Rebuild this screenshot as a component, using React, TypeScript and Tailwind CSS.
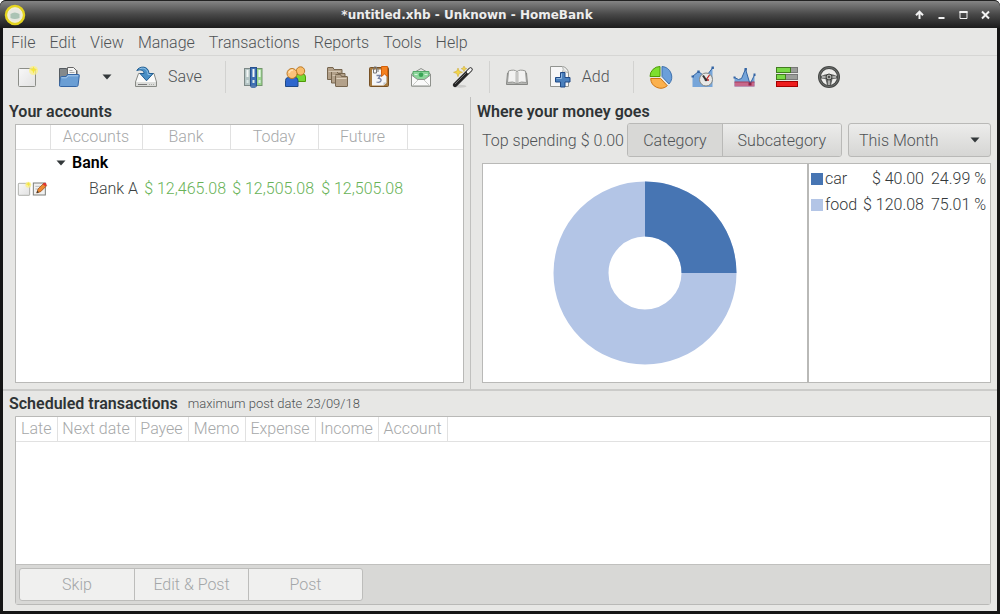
import { useState } from 'react';
import type { ReactNode } from 'react';
import clsx from 'clsx';

const menus = ['File', 'Edit', 'View', 'Manage', 'Transactions', 'Reports', 'Tools', 'Help'];

const scheduledColumns = [
  { label: 'Late', width: 'w-[41px]' },
  { label: 'Next date', width: 'w-[78px]' },
  { label: 'Payee', width: 'w-[53px]' },
  { label: 'Memo', width: 'w-[57px]' },
  { label: 'Expense', width: 'w-[70px]' },
  { label: 'Income', width: 'w-[63px]' },
  { label: 'Account', width: 'w-[69px]' },
];

const spending = [
  { name: 'car', amount: '$ 40.00', rate: '24.99 %', color: 'bg-[#4775b3]' },
  { name: 'food', amount: '$ 120.08', rate: '75.01 %', color: 'bg-[#b3c5e6]' },
];

function Icon({ children, className = 'size-6' }: { children: ReactNode; className?: string }) {
  return (
    <svg viewBox="0 0 24 24" className={clsx('shrink-0', className)} aria-hidden="true">
      {children}
    </svg>
  );
}

function Arrow() {
  return (
    <svg viewBox="0 0 10 6" className="w-[10px] h-[6px] shrink-0" aria-hidden="true">
      <path d="M0.5 0.5h9L5 5.5z" fill="#33383a" />
    </svg>
  );
}

function NewIcon({ className }: { className?: string }) {
  return (
    <Icon className={className}>
      <defs>
        <linearGradient id="paper" x1="0" y1="0" x2="1" y2="1">
          <stop offset="0" stopColor="#f8f8f8" />
          <stop offset="1" stopColor="#e2e2e2" />
        </linearGradient>
      </defs>
      <rect x="3.5" y="3.5" width="17" height="18" rx="1" fill="url(#paper)" stroke="#8c8e88" />
      <circle cx="18.5" cy="5.5" r="4.5" fill="#fbf08a" opacity="0.8" />
      <path d="M18.5 1.5l1 2.3 2.5 1-2.5 1-1 2.6-1-2.6-2.6-1 2.6-1z" fill="#f5e63a" />
    </Icon>
  );
}

function OpenIcon() {
  return (
    <Icon>
      <path d="M2.500 3.500h7l1 2h9.500v14H2.500z" fill="#84898c" stroke="#555b60" />
      <path d="M10.500 2.500h6l3 3V13h-9z" fill="#f4f4f2" stroke="#666" />
      <path d="M12.500 5.500h3M12.500 7.500h5" stroke="#aaa" />
      <path d="M4.500 11.500h4.500l1.500-2H21.500q1 0 .8 1L21 20.500q-.2 1-1.500 1H3.500q-1.200 0-1-1.500l.8-7.500q.2-1 1.200-1z" fill="#6a9ed4" stroke="#3465a4" />
      <path d="M4.500 12.800h5l1.500-2h10" fill="none" stroke="#a9c9ea" />
    </Icon>
  );
}

function SaveIcon() {
  return (
    <Icon>
      <path d="M4.500 8.500h15.500l2.500 8.500v4.500h-21V17z" fill="#fafaf9" stroke="#888a85" />
      <path d="M2 17h20v4H2z" fill="#dcddda" />
      <path d="M4 19.500h9" stroke="#777" />
      <path d="M15 19.500h5" stroke="#a9aaa7" strokeDasharray="1 1" />
      <path d="M2.800 5.500C5 1 14.500 0 15 8.500h4.200L12.500 15.800 6 8.500h4C10 5.200 6.500 4.200 2.800 5.500z" fill="#4a8fc5" stroke="#245f93" />
      <path d="M5.500 3.900C9.500 2.200 13.600 3.500 14 9.500h2.500" fill="none" stroke="#8fc0e5" />
    </Icon>
  );
}

function BooksIcon() {
  return (
    <Icon>
      <rect x="3.500" y="3.500" width="6" height="17" fill="#b4c4c4" stroke="#7c8886" />
      <rect x="15.500" y="3.500" width="5.500" height="17" fill="#9bd68e" stroke="#72956d" />
      <rect x="9.500" y="2.500" width="6" height="18.500" fill="#3e70b4" stroke="#28518d" />
      <path d="M5.500 5h2v7h-2zM11.500 4h2v8h-2zM17.500 5h2v7h-2z" fill="#f3f7f6" />
      <path d="M5.500 15h2v3h-2zM11.500 15h2v3h-2zM17.500 15h2v3h-2z" fill="#dce9e7" />
      <ellipse cx="12.500" cy="21.500" rx="3" ry="1.500" fill="#557baf" />
    </Icon>
  );
}

function PeopleIcon() {
  return (
    <Icon>
      <path d="M13 16.500v-4.500q0-3 3-3h3.500q3 0 3 3v4.500z" fill="#75d735" stroke="#4e9a06" />
      <circle cx="17.500" cy="6" r="4.200" fill="#f8bd6b" stroke="#bd7a27" />
      <path d="M2.500 21.500v-6q0-3 3-3h6.500q3 0 3 3v6z" fill="#2e67cd" stroke="#204a87" />
      <circle cx="9" cy="8.500" r="5" fill="#fbc27a" stroke="#bd7a27" />
      <path d="M6 8q1-3 4-3" fill="none" stroke="#ffe1b3" strokeWidth="1.500" />
    </Icon>
  );
}

function FoldersIcon() {
  return (
    <Icon>
      <g fill="#b3a18a" stroke="#77664f">
        <path d="M2.500 14.500V3q0-.5.500-.5h5l1 2h8v10z" />
        <path d="M6.500 18V7q0-.5.500-.5h5l1 2h7V18z" />
        <path d="M10.500 21V10q0-.5.500-.5h4.500l1 2H22q.5 0 .5.500v9q0 .5-.5.500H11q-.5 0-.5-.5z" />
      </g>
      <path d="M11.500 13.500h10" stroke="#ddd0bd" />
      <path d="M3.500 6.500h12M7.500 10.500h3" stroke="#d3c5b1" />
    </Icon>
  );
}

function CalendarIcon() {
  return (
    <Icon>
      <rect x="2.500" y="2.500" width="19" height="19" rx="1" fill="#a77b3f" stroke="#775125" />
      <path d="M5 4.500h14.500v13.500l-3 2.500H5z" fill="#f5f6f8" />
      <path d="M14.500 1.500h6v10L17.500 9l-3 2.500z" fill="#f58220" stroke="#d4600a" />
      <path d="M7 5V2h2.500v6H6.500V4M11 3v4" fill="none" stroke="#777" />
      <path d="M9.500 10.500h4l-2 2.800q3 .2 2.500 2.500-1 2.200-4.500 1.200" fill="none" stroke="#7582a5" strokeWidth="1.300" />
      <path d="M16.500 20.500v-3h3z" fill="#bfc3c9" />
    </Icon>
  );
}

function MailIcon() {
  return (
    <Icon>
      <path d="M2.500 9L12 3.500 21.500 9v12h-19z" fill="#e6e7e4" stroke="#8f928d" />
      <path d="M4 6.500h16v6L12 16l-8-3.500z" fill="#8cd69b" stroke="#54a868" />
      <circle cx="12" cy="9.800" r="2.300" fill="#39a456" />
      <path d="M5.500 9.500h3M15.500 9.500h3" stroke="#d6f3dc" />
      <path d="M2.500 10l6 4.500h7l6-4.500v11h-19z" fill="#fafafa" stroke="#8f928d" />
      <path d="M3 21l6-6M21 21l-6-6" stroke="#c9cbc7" />
    </Icon>
  );
}

function WandIcon() {
  return (
    <Icon>
      <ellipse cx="9" cy="21.300" rx="6.500" ry="1.500" fill="#cbcbc9" />
      <path d="M4 20L19.500 4.500" stroke="#242424" strokeWidth="4.400" strokeLinecap="round" />
      <path d="M17 7L19.500 4.500" stroke="#f4f4f4" strokeWidth="2.600" strokeLinecap="round" />
      <path d="M4 19L15 8" stroke="#717171" />
      <g fill="#f3d64b" stroke="#c9a52e" strokeWidth="0.500">
        <path d="M7 3l1.200 3.100 3.300 1.200-3.300 1.200L7 11.700 5.800 8.500 2.500 7.300l3.300-1.200z" />
        <path d="M13 1l.8 1.900 2 .8-2 .8L13 6.500l-.8-2-2-.8 2-.8z" />
      </g>
    </Icon>
  );
}

function BookIcon() {
  return (
    <Icon>
      <path d="M2.500 8L1.500 19.500h21L21.500 8z" fill="#b5b6b3" stroke="#858683" />
      <path d="M3.500 6Q9 4 12 6.500 15 4 20.500 6L21.500 17.500q-5.500-1.500-9.500 1-4-2.500-9.500-1z" fill="#f2f2f1" stroke="#979895" />
      <path d="M12 6.500v12" stroke="#999a97" />
      <path d="M10.500 7v10M13.500 7v10" stroke="#d7d7d5" />
    </Icon>
  );
}

function AddIcon() {
  return (
    <Icon>
      <path d="M2.500 1.500h12q5 1 6 6.500v13.500h-18z" fill="#f7f7f7" stroke="#929490" />
      <path d="M14.500 1.500q1.500 3-.2 6 3.500-1.500 6.200.5" fill="#dfe1de" stroke="#b5b7b3" />
      <path d="M12.500 7.500h4.500v5h5v4.500h-5v5h-4.500v-5h-5v-4.500h5z" fill="#4a80bd" stroke="#204a87" />
      <path d="M13.500 8.500v5h-5" fill="none" stroke="#91b7df" />
    </Icon>
  );
}

function PieIcon() {
  return (
    <Icon>
      <path d="M13 1.500a10.500 10.500 0 0 1 7 17.500L13 11.500z" fill="#6b9fda" stroke="#3f72ad" />
      <path d="M11 11.500v-10A10 10 0 0 0 1 11.500z" fill="#7de02e" stroke="#4e9a06" />
      <path d="M11.500 13.500l6.800 7.200A10 10 0 0 1 1.700 13.500z" fill="#fbb14e" stroke="#ce7411" />
    </Icon>
  );
}

function TrendIcon() {
  return (
    <Icon>
      <path d="M1.500 11.500l6-5 5 4 4-1 5-6.500v19h-20z" fill="#76a5d9" />
      <path d="M1.500 11.500l6-5 5 4 4-1 5-6.500" fill="none" stroke="#3465a4" />
      <path d="M.5 10.500h2.500v2H.5zM6.300 5.500h2.400v2.400H6.300zM20.500 1.500h2.400v2.400h-2.400z" fill="#3465a4" />
      <circle cx="15" cy="14.500" r="6.500" fill="#e7e7e5" stroke="#858783" />
      <path d="M12 10.500l3 4.500" stroke="#333" strokeWidth="2" />
      <path d="M18.500 10L15 15h3" fill="none" stroke="#c32222" strokeWidth="1.300" />
      <circle cx="15" cy="15" r="1.300" fill="#333" />
    </Icon>
  );
}

function BalanceIcon() {
  return (
    <Icon>
      <path d="M1.500 12.500l4 2 3-1 4-9.500 4.500 15 4.500-9v11.500h-20z" fill="#76a5d9" />
      <path d="M1.500 17h20v4.500h-20z" fill="#c7688a" />
      <path d="M1.500 17h20" stroke="#a63b5b" />
      <path d="M1.500 12.500l4 2 3-1 4-9.500 4.500 15 4.500-9" fill="none" stroke="#3465a4" />
      <path d="M.5 11.500h2v2h-2zM11.500 3h2.400v2.500h-2.400zM20.500 8.500h2v2.500h-2z" fill="#3465a4" />
      <path d="M15.500 17.500h3v3h-3z" fill="#8f2448" />
    </Icon>
  );
}

function BudgetIcon() {
  return (
    <Icon>
      <rect x="1.500" y="2.500" width="21" height="5" fill="#9b9d99" stroke="#777" />
      <rect x="1.500" y="2.500" width="14" height="5" fill="#79d947" stroke="#427d20" />
      <rect x="1.500" y="9.500" width="21" height="5" fill="#9b9d99" stroke="#777" />
      <rect x="1.500" y="9.500" width="9" height="5" fill="#79d947" stroke="#427d20" />
      <rect x="1.500" y="16.500" width="21" height="5" fill="#ee1d1d" stroke="#a40000" />
    </Icon>
  );
}

function WheelIcon() {
  return (
    <Icon>
      <circle cx="12" cy="12" r="9.500" fill="#ededeb" stroke="#454745" strokeWidth="3" />
      <circle cx="12" cy="12" r="9.500" fill="none" stroke="#797b78" strokeWidth="0.800" />
      <path d="M4 11q8-4 16 0v2.500l-4.500.5-1.500 6h-4l-1.500-6-4.500-.5z" fill="#606260" />
      <path d="M5 12h14M12 13v7" stroke="#c4c5c2" strokeWidth="1.500" />
      <circle cx="12" cy="12" r="3" fill="#a7a9a5" stroke="#3c3e3c" />
      <circle cx="12" cy="12" r="1" fill="#333" />
    </Icon>
  );
}

function EditIcon() {
  return (
    <Icon className="size-4">
      <rect x="2" y="3" width="18" height="18" fill="#f1f1f1" stroke="#7c7e7a" strokeWidth="1.500" />
      <path d="M5 8h8M5 12h5" stroke="#bbb" strokeWidth="1.500" />
      <path d="M7 18l2-6L18 3l4 4-9 9z" fill="#ed8a31" stroke="#8c4512" />
      <path d="M16 5l2-2q2-1 3 .5 1.500 1.500.5 3L20 8z" fill="#d33" />
      <path d="M7 18l1-3.500 2.500 2.500z" fill="#333" />
    </Icon>
  );
}

function ToolButton({ label, children }: { label: string; children: ReactNode }) {
  return (
    <button type="button" aria-label={label} className="w-[42px] h-9 flex items-center justify-center">
      {children}
    </button>
  );
}

function Separator() {
  return <div className="w-px h-8 bg-[#d2d2d0] mr-1.5" />;
}

function TitleBar() {
  return (
    <header className="h-7 shrink-0 flex items-center px-1 rounded-t-md bg-linear-to-b from-[#858585] via-[#484848] to-[#1c1c1c] border-t border-[#222]">
      <svg viewBox="0 0 22 22" className="size-[22px]" aria-hidden="true">
        <circle cx="11" cy="11" r="9" fill="#e6e6df" stroke="#e5d51f" strokeWidth="2.500" />
        <circle cx="11" cy="11" r="7" fill="none" stroke="#f7f3c8" />
        <path d="M6.500 10q4-3 9 0v4q-5 2-9 0z" fill="#abc3b4" />
      </svg>
      <h1 className="flex-1 text-center font-['DejaVu_Sans'] font-bold text-xs text-[#ededed]">
        *untitled.xhb - Unknown - HomeBank
      </h1>
      <div className="flex">
        <button type="button" aria-label="Shade" className="w-[22px] flex justify-center">
          <svg viewBox="0 0 9 10" className="w-[9px] h-[10px]"><path d="M4.500 9V2M1 5.200L4.500 1.700 8 5.200" fill="none" stroke="#f2f2f2" strokeWidth="2" /></svg>
        </button>
        <button type="button" aria-label="Minimize" className="w-[22px] flex justify-center">
          <svg viewBox="0 0 9 10" className="w-[9px] h-[10px]"><path d="M1.500 8h6" stroke="#f2f2f2" strokeWidth="2" /></svg>
        </button>
        <button type="button" aria-label="Maximize" className="w-[22px] flex justify-center">
          <svg viewBox="0 0 9 10" className="w-[9px] h-[10px]"><path d="M1 1.500v7h7v-7" fill="none" stroke="#f2f2f2" /><path d="M.5 2h8" stroke="#f2f2f2" strokeWidth="2" /></svg>
        </button>
        <button type="button" aria-label="Close" className="w-[22px] flex justify-center">
          <svg viewBox="0 0 9 10" className="w-[9px] h-[10px]"><path d="M1 1.500l7 7M8 1.500l-7 7" stroke="#f2f2f2" strokeWidth="2" /></svg>
        </button>
      </div>
    </header>
  );
}

function Toolbar() {
  return (
    <div className="h-[41px] shrink-0 flex items-center pl-[3px] pt-px">
      <ToolButton label="New"><NewIcon /></ToolButton>
      <ToolButton label="Open"><OpenIcon /></ToolButton>
      <button type="button" aria-label="Recent files" className="w-[34px] h-9 flex items-center justify-center">
        <Arrow />
      </button>
      <button type="button" className="h-9 flex items-center gap-2.5 pl-2.5 mr-[23px]">
        <SaveIcon /> Save
      </button>
      <Separator />
      <ToolButton label="Accounts"><BooksIcon /></ToolButton>
      <ToolButton label="Payees"><PeopleIcon /></ToolButton>
      <ToolButton label="Categories"><FoldersIcon /></ToolButton>
      <ToolButton label="Scheduled"><CalendarIcon /></ToolButton>
      <ToolButton label="Budget"><MailIcon /></ToolButton>
      <ToolButton label="Assignments"><WandIcon /></ToolButton>
      <div className="w-[5px]" />
      <Separator />
      <ToolButton label="Show transactions"><BookIcon /></ToolButton>
      <button type="button" className="h-9 flex items-center gap-2.5 pl-2.5 mr-[23px]">
        <AddIcon /> Add
      </button>
      <Separator />
      <ToolButton label="Statistics"><PieIcon /></ToolButton>
      <ToolButton label="Trend time"><TrendIcon /></ToolButton>
      <ToolButton label="Balance"><BalanceIcon /></ToolButton>
      <ToolButton label="Budget report"><BudgetIcon /></ToolButton>
      <ToolButton label="Vehicle cost"><WheelIcon /></ToolButton>
    </div>
  );
}

function Accounts() {
  return (
    <section className="w-[468px] shrink-0 flex flex-col pl-1.5 pr-1.5 pb-1.5 border-r border-[#c0c0be]">
      <h2 className="font-semibold leading-[30px] h-[27px] text-[#2f3436]">Your accounts</h2>
      <div className="flex-1 ml-1.5 bg-white border border-[#b9b9b7]">
        <table className="w-full table-fixed border-collapse text-[#3c3f41]">
          <colgroup>
            <col className="w-[34px]" />
            <col className="w-[92px]" />
            <col className="w-[88px]" />
            <col className="w-[88px]" />
            <col className="w-[89px]" />
            <col />
          </colgroup>
          <thead>
            <tr className="h-6 text-[#a6a8a9] border-b border-[#e1e1e1]">
              <th className="border-r border-[#e1e1e1]" />
              <th className="p-0 font-light leading-6 border-r border-[#e1e1e1]">Accounts</th>
              <th className="p-0 font-light leading-6 border-r border-[#e1e1e1]">Bank</th>
              <th className="p-0 font-light leading-6 border-r border-[#e1e1e1]">Today</th>
              <th className="p-0 font-light leading-6 border-r border-[#e1e1e1]">Future</th>
              <th />
            </tr>
          </thead>
          <tbody>
            <tr className="h-[26px]">
              <td />
              <td className="pl-1.5">
                <button type="button" className="flex items-center gap-1.5 font-semibold text-black">
                  <Arrow /> Bank
                </button>
              </td>
              <td colSpan={4} />
            </tr>
            <tr className="h-[26px] text-right">
              <td>
                <div className="flex">
                  <NewIcon className="size-4" />
                  <EditIcon />
                </div>
              </td>
              <td className="pr-1">Bank A</td>
              <td className="pr-1 text-[#68b257] whitespace-nowrap">$ 12,465.08</td>
              <td className="pr-1 text-[#68b257] whitespace-nowrap">$ 12,505.08</td>
              <td className="pr-1 text-[#68b257] whitespace-nowrap">$ 12,505.08</td>
              <td />
            </tr>
          </tbody>
        </table>
      </div>
    </section>
  );
}

function TopSpending() {
  const [view, setView] = useState('Category');

  return (
    <section className="flex-1 min-w-0 flex flex-col pl-1.5 pr-1.5 pb-1.5">
      <h2 className="font-semibold leading-[30px] h-[26px] text-[#2f3436]">Where your money goes</h2>
      <div className="pl-[5px] h-[34px] flex items-center">
        <span className="pt-0.5 whitespace-nowrap">Top spending</span>
        <span className="pt-0.5 ml-1 mr-auto whitespace-nowrap">$ 0.00</span>
        <div className="flex h-[34px] border border-[#b9b9b7] rounded-[3px] overflow-hidden">
          {['Category', 'Subcategory'].map((name) => (
            <button
              key={name}
              type="button"
              aria-pressed={view === name}
              onClick={() => setView(name)}
              className={clsx(
                'px-[15px] pt-0.5 border-[#b9b9b7] not-first:border-l',
                view === name ? 'bg-[#d8d8d6]' : 'bg-linear-to-b from-[#ececeb] to-[#d6d6d4]'
              )}
            >
              {name}
            </button>
          ))}
        </div>
        <div className="relative ml-1.5 w-[143px]">
          <select
            aria-label="Date range"
            className="block appearance-none w-full h-[34px] pl-2.5 pt-0.5 border border-[#b9b9b7] rounded-[3px] bg-linear-to-b from-[#ececeb] to-[#d6d6d4]"
          >
            <option>This Month</option>
            <option>Last Month</option>
            <option>This Year</option>
          </select>
          <span className="absolute right-[11px] inset-y-0 flex items-center pointer-events-none"><Arrow /></span>
        </div>
      </div>
      <div className="flex-1 mt-1.5 ml-[5px] flex bg-white border border-[#b9b9b7]">
        <div className="flex-1 flex items-center justify-center">
          <svg viewBox="0 0 184 184" className="size-[184px]" role="img" aria-label="Spending by category">
            <circle cx="92" cy="92" r="64" fill="none" stroke="#b3c5e6" strokeWidth="55" />
            <path d="M92 28a64 64 0 0 1 64 64" fill="none" stroke="#4775b3" strokeWidth="55" />
          </svg>
        </div>
        <div className="w-[183px] shrink-0 border-l-2 border-[#b9b9b7] pl-0.5 pr-1 pt-0.5">
          <table className="w-full text-[#33383a]">
            <tbody>
              {spending.map((item) => (
                <tr key={item.name} className="h-[26px]">
                  <td>
                    <div className="flex items-center gap-0.5">
                      <span className={clsx('size-3', item.color)} />
                      {item.name}
                    </div>
                  </td>
                  <td className="text-right whitespace-nowrap">{item.amount}</td>
                  <td className="text-right whitespace-nowrap w-[62px]">{item.rate}</td>
                </tr>
              ))}
            </tbody>
          </table>
        </div>
      </div>
    </section>
  );
}

function Scheduled() {
  return (
    <section className="h-[222px] shrink-0 flex flex-col border-t-2 border-[#cbcbc9] px-1.5 pb-1.5">
      <div className="flex items-center h-[25px] pt-px">
        <h2 className="font-semibold text-[#2f3436]">Scheduled transactions</h2>
        <span className="ml-2.5 text-[13px] leading-5">maximum post date</span>
        <span className="ml-1 text-[13px] leading-5">23/09/18</span>
      </div>
      <div className="flex-1 ml-1.5 flex flex-col border border-[#b9b9b7] rounded-b-[3px]">
        <div className="flex-1 bg-white">
          <table className="w-full table-fixed border-collapse">
            <thead>
              <tr className="h-6 text-[#a6a8a9] border-b border-[#e1e1e1]">
                {scheduledColumns.map((col) => (
                  <th
                    key={col.label}
                    className={clsx('p-0 font-light leading-6 text-center whitespace-nowrap border-r border-[#e1e1e1]', col.width)}
                  >
                    {col.label}
                  </th>
                ))}
                <th />
              </tr>
            </thead>
            <tbody />
          </table>
        </div>
        <div className="border-t border-[#c0c0be] bg-[#d8d8d6] p-[3px] flex">
          <div className="flex border border-[#bdbdbb] rounded-[3px] bg-[#f0f0ef] text-[#a3a6a8]">
            <button type="button" disabled className="w-[114px] h-[31px] pt-px">Skip</button>
            <button type="button" disabled className="w-[115px] h-[31px] pt-px border-x border-[#bdbdbb]">Edit &amp; Post</button>
            <button type="button" disabled className="w-[113px] h-[31px] pt-px">Post</button>
          </div>
        </div>
      </div>
    </section>
  );
}

export default function App() {
  return (
    <div className="h-screen min-h-[560px] flex flex-col rounded-t-md bg-[#151515] font-[Roboto,sans-serif] font-light text-base text-[#4f5355]">
      <TitleBar />
      <main className="flex-1 min-h-0 flex flex-col mx-[3px] mb-[3px] bg-[#e7e7e5]">
        <nav className="h-7 shrink-0 flex items-center pl-px border-b border-[#d6d6d4]">
          {menus.map((menu) => (
            <button key={menu} type="button" className="px-[7px] pt-0.5 h-full">
              {menu}
            </button>
          ))}
        </nav>
        <Toolbar />
        <div className="flex-1 min-h-0 flex">
          <Accounts />
          <TopSpending />
        </div>
        <Scheduled />
      </main>
    </div>
  );
}
